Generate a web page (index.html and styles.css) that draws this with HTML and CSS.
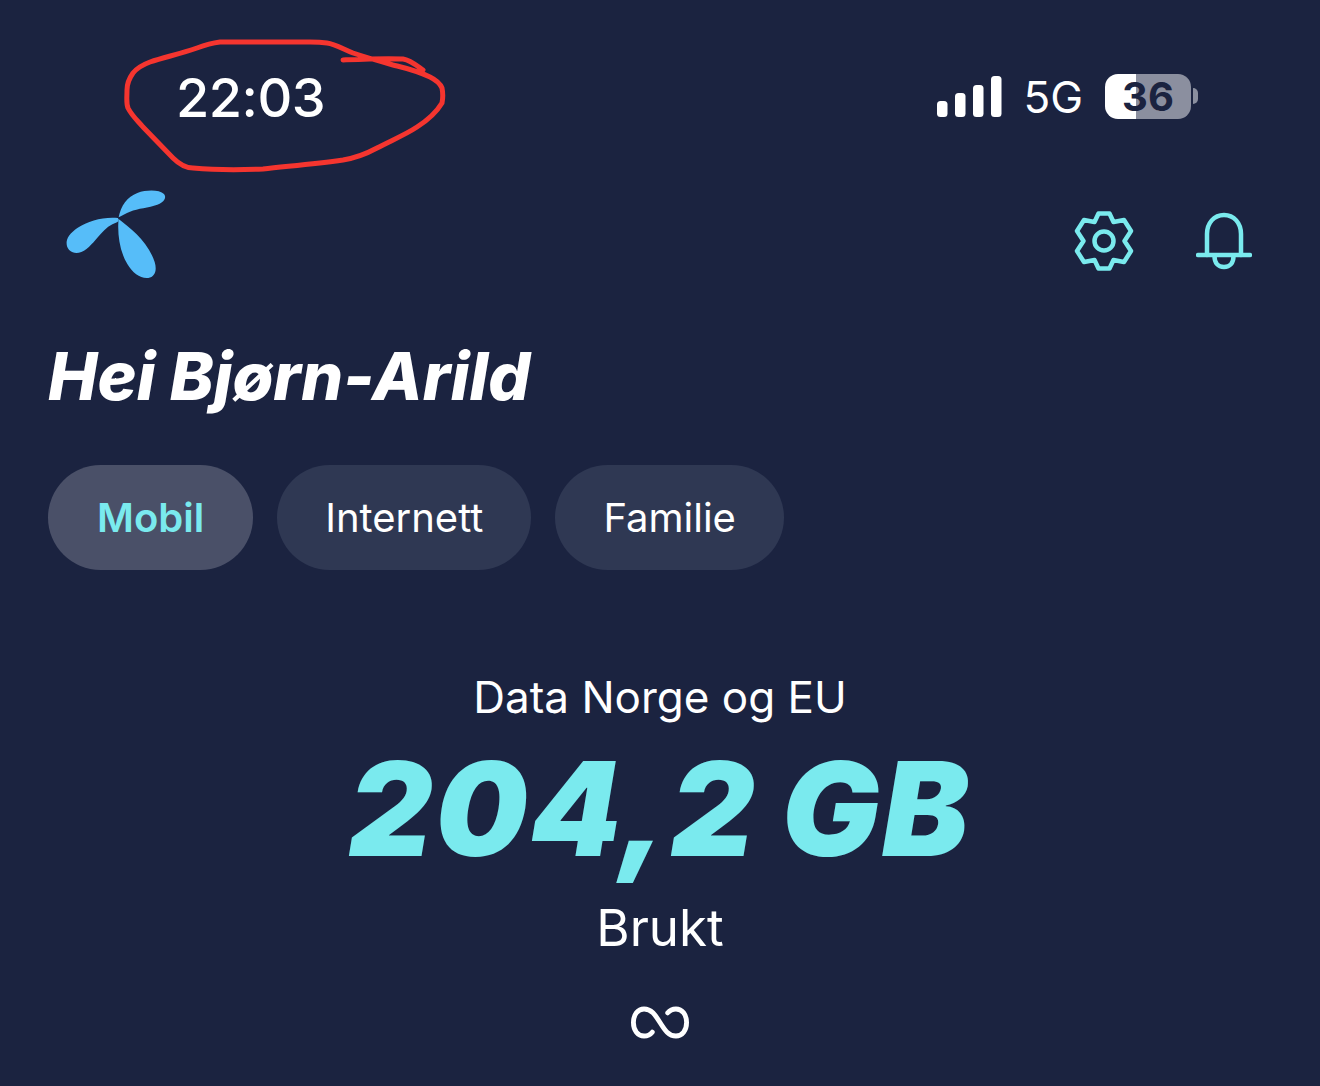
FILE: index.html
```html
<!DOCTYPE html>
<html lang="no">
<head>
<meta charset="utf-8">
<title>Telenor</title>
<link rel="stylesheet" href="styles.css">
</head>
<body>
<main class="screen">
  <header class="status">
    <span class="time">22:03</span>
    <div class="status-right">
      <svg class="signal" viewBox="0 0 66 42" width="66" height="42" aria-hidden="true">
        <rect x="0" y="25" width="10.500" height="16" rx="3.500"/>
        <rect x="18" y="17" width="10.500" height="24" rx="3.500"/>
        <rect x="36" y="9" width="10.500" height="32" rx="3.500"/>
        <rect x="54" y="0" width="10.500" height="41" rx="3.500"/>
      </svg>
      <span class="net">5G</span>
      <div class="battery">
        <div class="battery-body"><span class="battery-level">36</span></div>
        <span class="battery-cap"></span>
      </div>
    </div>
  </header>

  <div class="topbar">
    <svg class="logo" viewBox="0 0 390 345" width="130" height="115" aria-hidden="true">
      <path d="M206 124C212 90 232 62 262 51C290 41 328 41 342 54C351 65 342 79 322 86C296 95 264 97 240 107C228 112 216 118 206 124Z"/>
      <path d="M204 126C160 122 116 134 82 156C62 170 48 186 50 205C52 226 72 236 94 228C116 219 132 196 152 174C166 158 182 145 201 139C205 138 206 132 204 126Z"/>
      <path d="M205 140C203 180 210 228 232 264C248 291 272 309 295 306C314 303 322 284 314 258C304 226 282 198 260 175C242 157 222 142 205 128Z"/>
    </svg>
    <div class="top-icons">
      <svg class="icon gear" viewBox="0 0 60 60" width="60" height="60" aria-hidden="true">
        <path d="M24.500 2.500H35.500L39.500 11L50 9L57 20L50.500 30L57 40L50 51L39.500 49L35.500 57.500H24.500L20.500 49L10 51L3 40L9.500 30L3 20L10 9L20.500 11Z"/>
        <circle cx="30" cy="30" r="9.500"/>
      </svg>
      <svg class="icon bell" viewBox="0 0 56 60" width="56" height="60" aria-hidden="true">
        <path d="M11 44V23C11 12 18 4 28 4S45 12 45 23V44"/>
        <path d="M2 44H54"/>
        <path d="M18.500 45C18.500 52 22 56 28 56S37.500 52 37.500 45"/>
      </svg>
    </div>
  </div>

  <h1 class="greeting">Hei Bjørn-Arild</h1>

  <nav class="tabs">
    <a class="tab tab-active">Mobil</a>
    <a class="tab">Internett</a>
    <a class="tab">Familie</a>
  </nav>

  <section class="usage">
    <p class="usage-label">Data Norge og EU</p>
    <p class="usage-value">204,2 GB</p>
    <p class="usage-sub">Brukt</p>
    <svg class="infinity" viewBox="0 0 60 36" width="58" height="35" aria-hidden="true">
      <path d="M30 18C25 10 21 4 13.500 4C7 4 2.500 10 2.500 18S7 32 13.500 32C17 32 20 30.500 22 28M30 18C35 26 39 32 46.500 32C53 32 57.500 26 57.500 18S53 4 46.500 4C43 4 40 5.500 38 8"/>
    </svg>
  </section>

  <svg class="scribble" viewBox="0 0 1320 200" width="1320" height="200" aria-hidden="true">
    <path d="M343 60C365 59 385 58 403 59C410 60 416 65 423 70M430 77C415 70 405 68 393 65C375 60 365 57 353 53C343 49 335 44 327 43C320 42 315 42 310 42H220C212 43 205 45 197 48C180 54 165 57 150 62C142 65 137 68 133 73C128 80 127 85 127 90C127 98 126 103 128 108C132 116 138 121 143 127L173 158C180 165 186 168 193 168C215 170 240 170 263 169C290 166 315 164 343 160C355 158 366 154 377 148C390 141 405 135 417 127C428 120 436 113 442 103C443 98 443 93 442 88C440 83 436 80 430 77"/>
  </svg>
</main>
</body>
</html>
```
FILE: styles.css
```css
* { box-sizing: border-box; }
html, body { margin: 0; padding: 0; }
body {
  background: #1b2340;
  color: #fff;
  font-family: Inter, "Liberation Sans", sans-serif;
  overflow: hidden;
}
.screen {
  position: relative;
  width: 1320px;
  height: 1086px;
  overflow: hidden;
  padding: 66px 0 0;
}
.status {
  display: flex;
  justify-content: space-between;
  align-items: center;
  height: 62px;
  padding: 0 122px 0 176px;
}
.time { font-size: 54px; font-weight: 500; line-height: 62px; letter-spacing: -.5px; padding-top: 2px; }
.status-right { display: flex; align-items: center; }
.signal { fill: #fff; margin-right: 20px; }
.net { font-size: 44px; font-weight: 400; line-height: 62px; margin-right: 22px; }
.battery { display: flex; align-items: center; margin-bottom: 2px; }
.battery-body {
  width: 86px;
  height: 45px;
  border-radius: 13px;
  background: linear-gradient(90deg, #fff 36%, #8b8f9f 36%);
  display: flex;
  align-items: center;
  justify-content: center;
}
.battery-level { color: #1b2340; font-size: 40px; font-weight: 700; line-height: 45px; }
.battery-cap {
  width: 5px;
  height: 16px;
  margin-left: 2px;
  border-radius: 0 8px 8px 0;
  background: #8b8f9f;
}
.topbar {
  display: flex;
  justify-content: space-between;
  align-items: center;
  height: 115px;
  margin-top: 48px;
  padding: 0 68px 0 50px;
}
.logo { fill: #56bdf9; display: block; }
.top-icons { display: flex; align-items: center; gap: 62px; margin-top: 14px; }
.icon { fill: none; stroke: #7aeaee; stroke-width: 4.5; stroke-linecap: round; stroke-linejoin: round; display: block; }
.greeting {
  margin: 46px 0 0 48px;
  font-size: 66px;
  line-height: 78px;
  font-weight: 800;
  font-style: italic;
  letter-spacing: 0;
}
.tabs { display: flex; gap: 24px; margin: 50px 0 0 48px; }
.tab {
  display: flex;
  align-items: center;
  height: 105px;
  padding: 0 48px;
  border-radius: 53px;
  background: #2f3853;
  font-size: 40px;
  font-weight: 400;
}
.tab-active { background: #4a5068; color: #7aeaee; font-weight: 600; padding: 0 49px; }
.usage { display: flex; flex-direction: column; align-items: center; margin-top: 99px; }
.usage-label { margin: 0; font-size: 44px; line-height: 56px; }
.usage-value {
  margin: 14px 0 0;
  font-size: 130px;
  line-height: 140px;
  font-weight: 900;
  font-style: italic;
  color: #7aeaee;
  letter-spacing: 2.5px;
  word-spacing: -4px;
}
.usage-sub { margin: 19px 0 0; font-size: 51px; line-height: 60px; }
.infinity { fill: none; stroke: #fff; stroke-width: 5; stroke-linecap: round; margin-top: 47px; }
.scribble {
  position: absolute;
  left: 0;
  top: 0;
  fill: none;
  stroke: #f5352f;
  stroke-width: 5;
  stroke-linecap: round;
  stroke-linejoin: round;
  pointer-events: none;
}
```
